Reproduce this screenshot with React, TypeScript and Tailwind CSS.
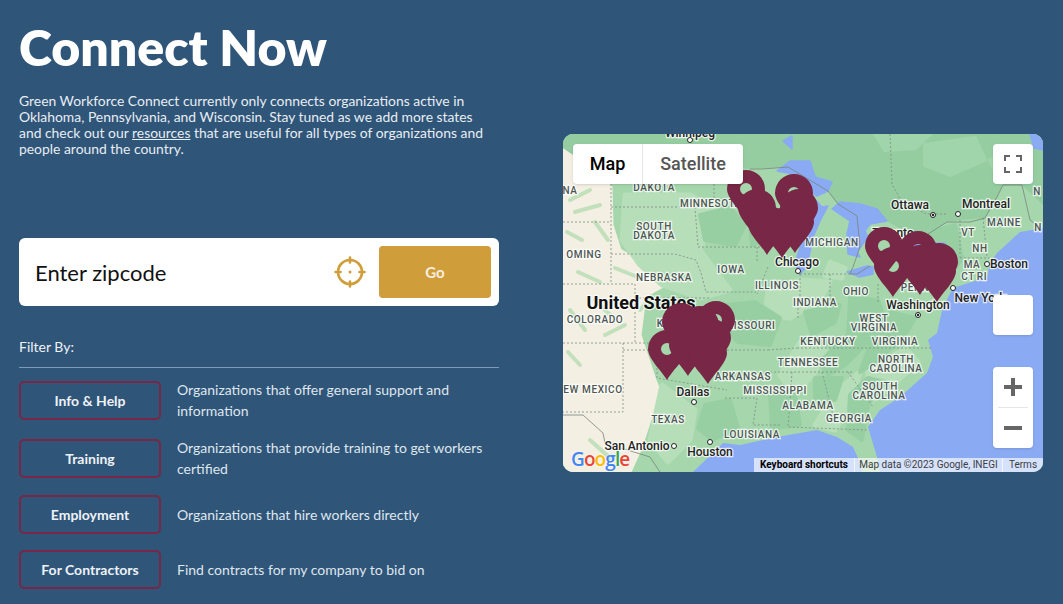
const filters = [
  { label: "Info & Help", text: "Organizations that offer general support and information" },
  { label: "Training", text: "Organizations that provide training to get workers certified" },
  { label: "Employment", text: "Organizations that hire workers directly" },
  { label: "For Contractors", text: "Find contracts for my company to bid on" },
];

// [x, y, text]
const states: [number, number, string][] = [
  [570, 190, "NA"], [654, 187, "DAKOTA"], [711, 203, "MINNESOTA"], [654, 226, "SOUTH"], [654, 235, "DAKOTA"], [584, 254, "OMING"],
  [664, 277, "NEBRASKA"], [731, 269, "IOWA"], [777, 285, "ILLINOIS"], [815, 302, "INDIANA"], [832, 242, "MICHIGAN"],
  [856, 291, "OHIO"], [1004, 222, "MAINE"], [968, 232, "VT"], [980, 248, "NH"], [972, 264, "MA"], [968, 276, "CT"], [982, 276, "RI"],
  [595, 319, "COLORADO"], [678, 323, "KANSAS"], [750, 325, "MISSOURI"], [743, 376, "ARKANSAS"], [775, 390, "MISSISSIPPI"], [593, 389, "EW MEXICO"],
  [668, 419, "TEXAS"], [752, 434, "LOUISIANA"], [874, 318, "WEST"], [874, 327, "VIRGINIA"], [895, 341, "VIRGINIA"],
  [828, 341, "KENTUCKY"], [808, 362, "TENNESSEE"], [896, 359, "NORTH"], [896, 368, "CAROLINA"], [880, 386, "SOUTH"],
  [879, 395, "CAROLINA"], [849, 418, "GEORGIA"], [808, 405, "ALABAMA"], [1037, 191, "N"], [1038, 227, "N"], [915, 287, "PENN"],
];

const cities: [number, number, string][] = [
  [690, 133, "Winnipeg"], [797, 262, "Chicago"], [893, 233, "Toronto"], [910, 205, "Ottawa"], [986, 204, "Montreal"], [1009, 264, "Boston"], [980, 298, "New York"],
  [918, 305, "Washington"], [693, 392, "Dallas"], [710, 452, "Houston"], [637, 446, "San Antonio"],
];

const dots: [number, number][] = [[690, 140], [798, 271], [933, 215], [958, 214], [987, 264], [953, 288], [918, 315], [694, 402], [710, 442], [674, 446]];

const canada = "M563 134H1043V205L1022 185H1003L997 197L985 218L960 220L947 222L928 234L905 232L887 221L860 204L838 204L828 191L788 167L750 169L700 165L640 160L600 165L585 160L563 150Z";

const darkPatches = [
  "M700 215L730 208L745 225L735 245L705 240Z",
  "M748 205L762 200L768 240L752 245Z",
  "M725 305L755 302L780 318L770 345L738 342L722 325Z",
  "M805 312L840 305L835 322L812 335Z",
  "M850 298L878 300L885 320L865 345L845 365L828 375L820 362L848 335Z",
  "M890 312L915 318L905 335L880 358L860 372L870 345Z",
  "M930 232L955 225L962 258L948 278L930 270Z",
  "M850 395L868 378L885 382L868 405L862 440L848 430Z",
  "M770 395L795 395L800 425L772 428Z",
  "M815 378L842 378L835 400L815 398Z",
  "M705 405L730 400L738 428L712 440L698 428Z",
];

const lightPatches = [
  "M625 195L690 195L715 210L700 250L730 290L700 298L662 285L640 265L622 240Z",
  "M662 385L695 410L690 440L668 462L650 440Z",
  "M768 290L800 280L830 282L820 300L790 318L765 315Z",
  "M800 342L825 350L815 372L795 395L780 375Z",
  "M835 392L860 372L850 405L835 430L815 425Z",
  "M868 372L905 348L918 362L888 390L866 405Z",
  "M830 262L845 268L842 278L825 276Z",
];

const canadaPatches = [
  "M875 134H930L915 148L885 150Z",
  "M925 145L975 138L985 160L950 175L925 165Z",
  "M990 160L1015 150L1025 175L1000 182Z",
];

// green streaks across the dry west
const streaks = [
  "M570 200L590 190", "M575 212L600 205", "M595 222L608 240", "M567 232L582 240", "M578 272L600 282", "M615 268L640 278",
  "M595 300L615 320", "M570 310L585 330", "M605 335L625 325", "M568 352L580 365", "M640 310L652 296", "M590 440L610 458",
];

const lakes = [
  "M777 171L790 161L810 161L815 177L832 182L828 191L817 196L805 189L793 174Z",
  "M813 197L822 207L828 206L820 221L813 237L807 267L800 274L795 264L800 247L806 220Z",
  "M832 209L840 202L860 204L877 209L887 221L870 224L865 231L868 237L857 252L860 257L848 254L847 234L850 221Z",
  "M847 272L867 266L873 267L873 274L860 277Z",
  "M892 243L945 243L945 255L892 260Z",
  "M783 141L792 136L792 149Z",
  "M1030 134H1043V150L1034 148Z",
];

const stateLines = [
  "M611 180V283", "M611 207H695L698 247", "M611 254H675L696 260L701 273L706 292H756", "M698 247H760", "M563 222H611", "M563 284H635V343",
  "M635 298H711", "M563 343H657", "M623 343V412H563", "M623 350H657V378L727 390", "M727 350H768", "M797 348H933",
  "M770 372H853", "M792 372L788 427L867 430", "M822 372L835 423", "M725 398H757L753 425H780", "M848 372L873 407",
  "M800 274V304", "M830 274V304", "M800 274H850", "M878 284V304", "M768 267L757 294", "M757 247V262", "M714 180V200",
  "M960 220V257", "M983 218L987 257", "M960 258H990", "M890 134L892 184L903 204L927 214L947 214", "M768 350L797 348", "M798 304V320",
];

const solidLines = [
  "M563 415H583L603 433L605 443L650 457L660 472",
  "M750 169H762L788 167L828 191L838 204L857 216L860 247L853 267L850 274H857L870 266",
  "M928 234L947 222H970L985 218L997 197L1003 185H1022L1030 220L1040 228",
];

// [cx, cy, hole]
const pins: [number, number, boolean][] = [
  [746, 189, true], [794, 193, true], [757, 208, false], [767, 224, false], [782, 227, false], [795, 222, false], [799, 208, false],
  [893, 266, true], [884, 246, true], [918, 250, true], [920, 264, false], [937, 271, false], [939, 262, false],
  [681, 322, false], [716, 320, true], [667, 349, true], [688, 345, false], [695, 335, false], [708, 353, false], [712, 338, false], [700, 325, false],
];

function pinPath(cx: number, cy: number, hole: boolean) {
  const body = `M${cx} ${cy + 31}C${cx - 5} ${cy + 22} ${cx - 19} ${cy + 10} ${cx - 19} ${cy}A19 19 0 1 1 ${cx + 19} ${cy}C${cx + 19} ${cy + 10} ${cx + 5} ${cy + 22} ${cx} ${cy + 31}Z`;
  return hole ? `${body}M${cx - 6} ${cy}a6 6 0 1 0 12 0a6 6 0 1 0 -12 0Z` : body;
}

function MapCanvas() {
  return (
    <svg viewBox="563 134 480 338" className="absolute inset-0 h-full w-full">
      <rect x="563" y="134" width="480" height="338" fill="#a6d7ac" />
      <path d={canada} fill="#95cda1" />
      {canadaPatches.map((d) => (
        <path key={d} d={d} fill="#a0d4aa" stroke="#a0d4aa" strokeWidth="4" strokeLinejoin="round" />
      ))}
      <path d="M563 150L585 165L611 187L612 225L620 250L650 268L665 285L645 296L640 335L655 380L663 400L650 420L640 450L630 472H563Z" fill="#f3efe2" stroke="#f3efe2" strokeWidth="3" strokeLinejoin="round" />
      {streaks.map((d) => (
        <path key={d} d={d} fill="none" stroke="#c3e0bc" strokeWidth="4" strokeLinecap="round" />
      ))}
      {lightPatches.map((d) => (
        <path key={d} d={d} fill="#b6deb9" stroke="#b6deb9" strokeWidth="5" strokeLinejoin="round" />
      ))}
      {darkPatches.map((d) => (
        <path key={d} d={d} fill="#97cfa3" stroke="#97cfa3" strokeWidth="4" strokeLinejoin="round" />
      ))}
      {/* water */}
      {lakes.map((d) => (
        <path key={d} d={d} fill="#8aaaf3" stroke="#8aaaf3" strokeWidth="1.5" strokeLinejoin="round" />
      ))}
      <path d="M1043 228L1020 232L997 253L990 263L987 277L953 288L943 307L941 315L937 333L928 340L933 357L927 373L900 397L880 410L868 427L877 457L880 472H1043Z" fill="#8aaaf3" />
      <path d="M693 472L723 443L740 445L777 437L800 433L817 430L837 437L853 447L858 458L862 472Z" fill="#8aaaf3" />
      {stateLines.map((d) => (
        <path key={d} d={d} fill="none" stroke="#7d8d84" strokeWidth="0.8" strokeDasharray="2 2" />
      ))}
      {solidLines.map((d) => (
        <path key={d} d={d} fill="none" stroke="#77857c" strokeWidth="0.8" />
      ))}
      <g fontFamily="Roboto, sans-serif" textAnchor="middle" paintOrder="stroke" stroke="#ffffff" strokeOpacity="0.75" strokeWidth="2.5">
        <g fill="#4d5652" fontSize="10" fontWeight="500" letterSpacing="0.6">
          {states.map(([x, y, t]) => (
            <text key={`${x}-${y}`} x={x} y={y + 4}>{t}</text>
          ))}
        </g>
        <text x="641" y="309" fill="#111111" fontSize="18" fontWeight="700">United States</text>
        <g fill="#1f2422" fontSize="12" fontWeight="500">
          {cities.map(([x, y, t]) => (
            <text key={t} x={x} y={y + 4}>{t}</text>
          ))}
        </g>
      </g>
      {dots.map(([x, y]) => (
        <circle key={`${x}-${y}`} cx={x} cy={y} r="2.5" fill="#ffffff" stroke="#222222" strokeWidth="1" />
      ))}
      <circle cx="933" cy="215" r="1.2" fill="#222222" />
      <circle cx="918" cy="315" r="1.2" fill="#222222" />
      {pins.map(([x, y, hole]) => (
        <path key={`${x}-${y}`} d={pinPath(x, y, hole)} fillRule="evenodd" fill="#782746" />
      ))}
    </svg>
  );
}

function MapPanel() {
  return (
    <div className="relative mt-[134px] h-[338px] w-[480px] overflow-hidden rounded-[10px] bg-[#a6d7ac] font-['Roboto',sans-serif]">
      <MapCanvas />
      <div className="absolute top-[10px] left-[10px] flex h-10 w-[170px] rounded-sm bg-white text-lg font-medium shadow-sm">
        <div className="flex w-[69px] items-center justify-center text-black">Map</div>
        <div className="flex flex-1 items-center justify-center border-l border-[#e6e6e6] text-[#565656]">Satellite</div>
      </div>
      <div className="absolute top-[10px] right-[10px] flex h-10 w-10 items-center justify-center rounded-sm bg-white shadow-sm">
        <svg viewBox="0 0 18 18" className="h-[18px] w-[18px]" fill="none" stroke="#666666" strokeWidth="2">
          <path d="M1 6V1H6M12 1H17V6M17 12V17H12M6 17H1V12" />
        </svg>
      </div>
      <div className="absolute top-[161px] right-[10px] h-10 w-10 rounded-sm bg-white shadow-sm" />
      <div className="absolute top-[233px] right-[10px] flex h-[81px] w-10 flex-col items-center rounded-sm bg-white shadow-sm">
        <svg viewBox="0 0 18 18" className="mt-[11px] h-[18px] w-[18px]" fill="#666666">
          <path d="M7 0H11V7H18V11H11V18H7V11H0V7H7Z" />
        </svg>
        <div className="mt-[11px] h-px w-[30px] bg-[#e6e6e6]" />
        <svg viewBox="0 0 18 18" className="mt-[11px] h-[18px] w-[18px]" fill="#666666">
          <path d="M0 7H18V11H0Z" />
        </svg>
      </div>
      <div className="absolute bottom-[1px] left-[8px] font-['Open_Sans',sans-serif] text-[19px] leading-6 font-semibold tracking-[-0.9px] [text-shadow:0_0_2px_#ffffff]">
        <span className="text-[#4285f4]">G</span>
        <span className="text-[#ea4335]">o</span>
        <span className="text-[#fbbc05]">o</span>
        <span className="text-[#4285f4]">g</span>
        <span className="text-[#34a853]">l</span>
        <span className="text-[#ea4335]">e</span>
      </div>
      <div className="absolute right-0 bottom-0 flex h-[14px] w-[289px] items-center bg-white/65 text-[10px] leading-[14px] text-[#3c4043]">
        <span className="w-[100px] text-center font-bold text-black">Keyboard shortcuts</span>
        <span className="w-[148px] border-l border-white/70 text-center">Map data ©2023 Google, INEGI</span>
        <span className="flex-1 border-l border-white/70 text-center">Terms</span>
      </div>
    </div>
  );
}

export default function App() {
  return (
    <div className="flex h-[604px] w-full gap-[64px] overflow-hidden bg-[#2f5579] pl-[19px] font-['Lato',sans-serif] text-white">
      <div className="w-[480px]">
        <h1 className="mt-[16px] text-[50px] leading-[62px] font-extrabold">Connect Now</h1>
        <p className="mt-[15px] max-w-[475px] text-[13.9px] leading-4 text-[#e8edf2]">
          Green Workforce Connect currently only connects organizations active in Oklahoma, Pennsylvania, and Wisconsin. Stay tuned as we add more states and check out our{" "}
          <a className="underline">resources</a> that are useful for all types of organizations and people around the country.
        </p>
        <div className="mt-[81px] flex h-[68px] items-center rounded-md bg-white pr-2 pl-4">
          <span className="flex-1 text-[22px] text-[#111111]">Enter zipcode</span>
          <svg viewBox="0 0 32 32" className="mr-[13px] h-[32px] w-[32px]" fill="none" stroke="#cf9e3a" strokeWidth="2.6">
            <circle cx="16" cy="16" r="12" />
            <path d="M16 1.5V6.5M16 25.5V30.5M1.5 16H6.5M25.5 16H30.5" strokeLinecap="round" />
            <circle cx="16" cy="16" r="1.5" fill="#cf9e3a" stroke="none" />
          </svg>
          <button className="h-[52px] w-[112px] rounded-[4px] bg-[#cf9e3a] text-[15px] font-bold text-[#f6efe0]">Go</button>
        </div>
        <div className="mt-[33px] text-[14px] leading-4 text-[#eef2f6]">Filter By:</div>
        <div className="mt-[12px] mb-[11px] h-px bg-[#7f9ab5]" />
        <div className="flex flex-col gap-4">
          {filters.map((f) => (
            <div key={f.label} className="flex items-center gap-4">
              <button className="h-[39px] w-[142px] shrink-0 rounded-[5px] border-2 border-[#782746] text-[14px] font-bold text-[#eef2f6]">{f.label}</button>
              <p className="text-[14px] leading-[21px] text-[#dfe6ed]">{f.text}</p>
            </div>
          ))}
        </div>
      </div>
      <MapPanel />
    </div>
  );
}
